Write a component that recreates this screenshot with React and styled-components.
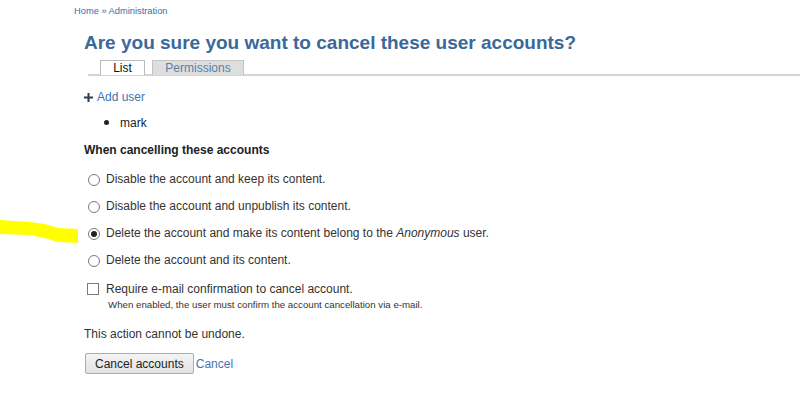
import React from "react";
import styled, { createGlobalStyle } from "styled-components";

const GlobalStyle = createGlobalStyle`
  html, body {
    margin: 0;
    padding: 0;
    background: #ffffff;
  }
  body {
    font-family: "Liberation Sans", Arial, sans-serif;
    font-size: 12px;
    color: #222;
  }
`;

const Page = styled.div`
  position: relative;
  width: 800px;
  height: 414px;
  overflow: hidden;
  background: #fff;
`;

const Breadcrumb = styled.div`
  padding: 6px 0 0 74px;
  font-size: 9.3px;
  line-height: 11px;
  color: #3b6ea5;
`;

const Main = styled.div`
  padding-left: 84px;
`;

const Title = styled.h1`
  margin: 14px 0 0;
  font-size: 19px;
  line-height: 24px;
  font-weight: bold;
  color: #3a689a;
`;

const Tabs = styled.ul`
  display: flex;
  gap: 7px;
  list-style: none;
  margin: 5px 0 0 4px;
  padding: 0 0 0 12px;
  border-bottom: 2px solid #d4d4d4;
`;

const Tab = styled.li`
  box-sizing: border-box;
  height: 15px;
  margin-bottom: -1px;
  border: 1px solid ${(p) => (p.active ? "#bbb" : "#c4c4c4")};
  border-bottom: none;
  background: ${(p) => (p.active ? "#fff" : "#dedede")};
  color: ${(p) => (p.active ? "#111" : "#5a80a8")};
  font-size: 12px;
  line-height: 14px;
  width: ${(p) => p.w}px;
  text-align: center;
`;

const AddLink = styled.a`
  display: flex;
  align-items: center;
  gap: 4px;
  margin-top: 13px;
  color: #3f74b3;
  text-decoration: none;
  font-size: 12px;
  line-height: 16px;
`;

const List = styled.ul`
  margin: 9px 0 0;
  padding-left: 36px;
  line-height: 16px;
  li::marker {
    font-size: 15px;
  }
`;

const SectionLabel = styled.div`
  margin-top: 11px;
  font-weight: bold;
  line-height: 16px;
  color: #222;
`;

const Options = styled.div`
  display: flex;
  flex-direction: column;
  gap: 11px;
  margin-top: 13px;
`;

const Option = styled.label`
  display: flex;
  align-items: center;
  gap: 6px;
  padding-left: 4px;
  line-height: 16px;
  color: #333;
`;

const Radio = styled.span`
  box-sizing: border-box;
  width: 12px;
  height: 12px;
  border-radius: 50%;
  border: 1px solid #7a7a7a;
  background: #fff;
  display: flex;
  align-items: center;
  justify-content: center;
  margin-top: 2px;
  &::after {
    content: "";
    width: 6px;
    height: 6px;
    border-radius: 50%;
    background: ${(p) => (p.checked ? "#222" : "transparent")};
  }
`;

const Checkbox = styled.span`
  box-sizing: border-box;
  width: 12px;
  height: 12px;
  border: 1px solid #7a7a7a;
  background: #fff;
  margin-left: -1px;
  margin-right: 1px;
`;

const CheckGroup = styled.div`
  margin-top: 13px;
`;

const Description = styled.div`
  margin: 2px 0 0 24px;
  font-size: 9.7px;
  line-height: 12px;
  color: #333;
`;

const Warning = styled.p`
  margin: 15px 0 0;
  line-height: 16px;
  color: #333;
`;

const Actions = styled.div`
  display: flex;
  align-items: center;
  gap: 2px;
  margin-top: 11px;
`;

const Button = styled.button`
  box-sizing: border-box;
  height: 21px;
  padding: 0 9px;
  margin-left: 1px;
  font-family: "Liberation Sans", Arial, sans-serif;
  font-size: 12px;
  color: #222;
  background: linear-gradient(#f4f4f4, #e2e2e2);
  border: 1px solid #acacac;
  border-radius: 2px;
`;

const Link = styled.a`
  color: #3f74b3;
  text-decoration: none;
  font-size: 12px;
`;

const Highlight = styled.svg`
  position: absolute;
  left: 0;
  top: 218px;
`;

const options = [
  { text: "Disable the account and keep its content." },
  { text: "Disable the account and unpublish its content." },
  {
    text: (
      <>
        Delete the account and make its content belong to the <em>Anonymous</em> user.
      </>
    ),
    checked: true,
  },
  { text: "Delete the account and its content." },
];

export default function App() {
  return (
    <Page>
      <GlobalStyle />
      <Breadcrumb>Home » Administration</Breadcrumb>
      <Main>
        <Title>Are you sure you want to cancel these user accounts?</Title>
        <Tabs>
          <Tab active w={45}>List</Tab>
          <Tab w={92}>Permissions</Tab>
        </Tabs>
        <AddLink href="#">
          <svg width="9" height="9" viewBox="0 0 9 9">
            <path d="M3.5 0h2v3.5H9v2H5.5V9h-2V5.5H0v-2h3.5z" fill="#2d3e50" />
          </svg>
          Add user
        </AddLink>
        <List>
          <li>mark</li>
        </List>
        <SectionLabel>When cancelling these accounts</SectionLabel>
        <Options>
          {options.map((o, i) => (
            <Option key={i}>
              <Radio checked={o.checked} />
              <span>{o.text}</span>
            </Option>
          ))}
        </Options>
        <CheckGroup>
          <Option>
            <Checkbox />
            <span>Require e-mail confirmation to cancel account.</span>
          </Option>
          <Description>
            When enabled, the user must confirm the account cancellation via e-mail.
          </Description>
        </CheckGroup>
        <Warning>This action cannot be undone.</Warning>
        <Actions>
          <Button>Cancel accounts</Button>
          <Link href="#">Cancel</Link>
        </Actions>
      </Main>
      <Highlight width="80" height="28" viewBox="0 0 80 28">
        <path
          d="M0 2 L30 4 L45 6 L58 10 L78 11 L78 25 L58 24 L44 20 L30 17 L0 16 Z"
          fill="#ffff00"
        />
      </Highlight>
    </Page>
  );
}
